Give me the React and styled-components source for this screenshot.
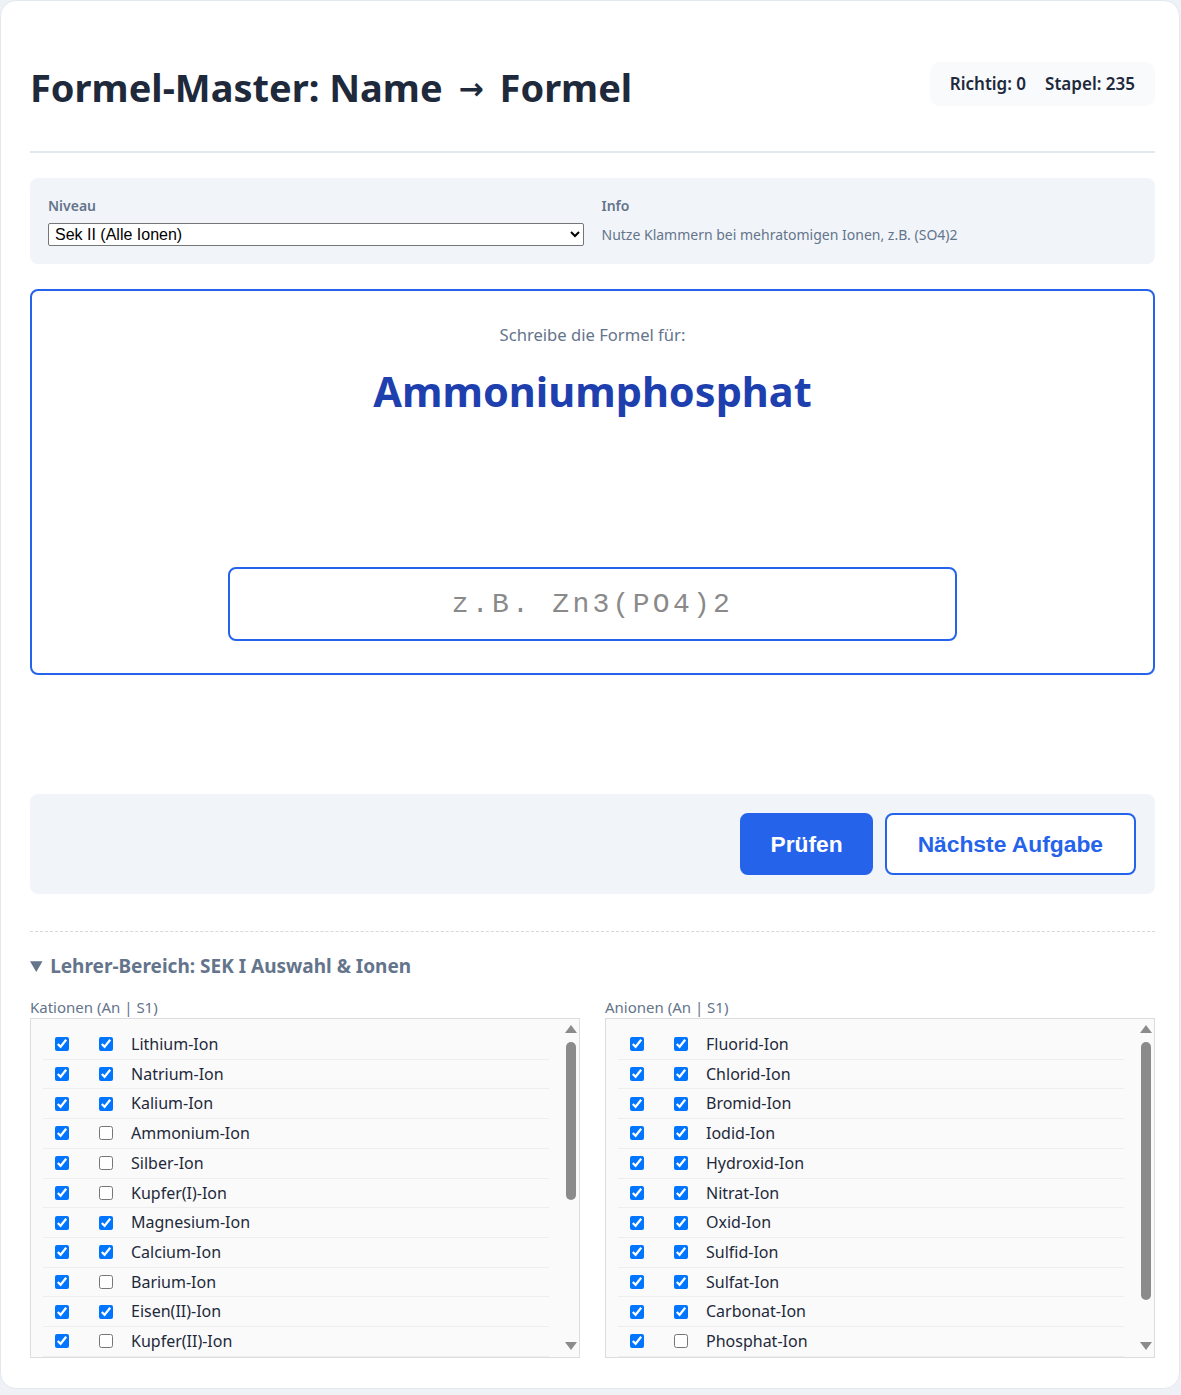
import React from 'react'
import styled, { createGlobalStyle } from 'styled-components'

const GlobalStyle = createGlobalStyle`
  * { box-sizing: border-box; }
  body {
    margin: 0;
    background: #eef2f6;
    font-family: "Noto Sans", "Open Sans", sans-serif;
    color: #1e293b;
  }
`

const Card = styled.div`
  width: 1180px;
  min-height: 1389px;
  background: #ffffff;
  border: 1px solid #e2e8f0;
  border-radius: 16px;
  padding: 63px 24px 30px 29px;
  display: flex;
  flex-direction: column;
`

const Header = styled.header`
  display: flex;
  justify-content: space-between;
  align-items: center;
  padding-bottom: 41px;
  border-bottom: 2px solid #e2e8f0;
`

const Title = styled.h1`
  margin: 0;
  font-size: 38px;
  line-height: 46px;
  font-weight: 700;
  color: #1e293b;
`

const TitleArrow = styled.span`
  font-family: "DejaVu Sans", sans-serif;
  font-size: 30px;
  line-height: 1;
  vertical-align: 3px;
  margin: 0 6px;
`

const Stats = styled.div`
  display: flex;
  gap: 19px;
  background: #f8fafc;
  border-radius: 10px;
  padding: 10px 20px;
  margin-top: -6px;
  font-size: 17px;
  font-weight: 600;
  line-height: 24px;
`

const Main = styled.main`
  display: flex;
  flex-direction: column;
  gap: 25px;
  margin-top: 25px;
`

const Panel = styled.section`
  background: #f1f5f9;
  border-radius: 8px;
  padding: ${({ $pad }) => $pad || '18px'};
`

const Controls = styled(Panel)`
  display: grid;
  grid-template-columns: 1fr 1fr;
  gap: 18px;
`

const Field = styled.div`
  display: flex;
  flex-direction: column;
  gap: 7px;
`

const Label = styled.label`
  font-size: 14px;
  font-weight: 600;
  line-height: 20px;
  color: #64748b;
`

const Select = styled.select`
  width: 100%;
  height: 23px;
  font-family: "Liberation Sans", Arial, sans-serif;
  font-size: 16px;
  color: #000;
  background: #fff;
  border: 1px solid #767676;
  border-radius: 2px;
  padding: 0 2px;
`

const InfoText = styled.span`
  font-size: 14px;
  line-height: 23px;
  color: #64748b;
`

const QuestionCard = styled.section`
  border: 2px solid #2563eb;
  border-radius: 8px;
  padding: 32px 30px;
  display: flex;
  flex-direction: column;
  align-items: center;
`

const Prompt = styled.p`
  margin: 0;
  font-size: 16.6px;
  line-height: 24px;
  color: #64748b;
`

const Compound = styled.h2`
  margin: 18px 0 0;
  font-size: 41.5px;
  line-height: 53px;
  font-weight: 700;
  color: #1e40af;
`

const Hint = styled.div`
  min-height: 149px;
`

const FormulaInput = styled.input`
  width: 729px;
  height: 74px;
  border: 2px solid #2563eb;
  border-radius: 8px;
  text-align: center;
  font-family: "Liberation Mono", "Courier New", monospace;
  font-size: 28px;
  letter-spacing: 3.3px;
  color: #1e293b;
  outline: none;

  &::placeholder { color: #8a8a8a; }
`

const Feedback = styled.div`
  min-height: 69px;
`

const Actions = styled(Panel)`
  display: flex;
  justify-content: flex-end;
  gap: 12px;
`

const Button = styled.button`
  height: 62px;
  padding: 0 ${({ $outline }) => ($outline ? '31px' : '28px')};
  border: 2px solid #2563eb;
  border-radius: 8px;
  background: ${({ $outline }) => ($outline ? '#fff' : '#2563eb')};
  color: ${({ $outline }) => ($outline ? '#2563eb' : '#fff')};
  font-family: "Liberation Sans", Arial, sans-serif;
  font-size: 22.8px;
  font-weight: 700;
  cursor: pointer;
`

const Divider = styled.hr`
  margin: 37px 0 0;
  border: 0;
  border-top: 1px dashed #d4d8de;
`

const Teacher = styled.details`
  margin-top: 21px;
`

const Summary = styled.summary`
  font-size: 19px;
  font-weight: 700;
  line-height: 27px;
  color: #64748b;
  cursor: pointer;
`

const Columns = styled.div`
  display: grid;
  grid-template-columns: 1fr 1fr;
  gap: 25px;
  margin-top: 17px;
`

const ColumnTitle = styled.div`
  font-size: 15px;
  line-height: 21px;
  color: #64748b;
`

const ListBox = styled.div`
  display: flex;
  height: 340px;
  border: 1px solid #dddddd;
  background: #fafafa;
`

const ListScroll = styled.div`
  flex: 1;
  overflow: hidden;
  padding: 11px 14px 8px 12px;
`

const ScrollRail = styled.div`
  width: 16px;
  display: flex;
  flex-direction: column;
  align-items: center;
  padding: 6px 0 7px;
`

const Arrow = styled.span`
  width: 0;
  height: 0;
  border-left: 6px solid transparent;
  border-right: 6px solid transparent;
  ${({ $down }) => ($down ? 'border-top' : 'border-bottom')}: 8px solid #8b8b8b;
  ${({ $down }) => ($down ? 'margin-top: auto;' : '')}
`

const Thumb = styled.span`
  width: 10px;
  height: ${({ $size }) => $size}px;
  margin-top: 9px;
  border-radius: 5px;
  background: #8b8b8b;
`

const Row = styled.label`
  display: grid;
  grid-template-columns: 44px 32px 1fr;
  align-items: center;
  padding: 4px 0 4px 12px;
  border-bottom: 1px solid #eeeeee;
  font-size: 16px;
  line-height: 20.7px;
  color: #1e293b;
`

const Check = styled.input`
  margin: 0;
  width: 14px;
  height: 14px;
`

const kationen = [
  ['Lithium-Ion', true], ['Natrium-Ion', true], ['Kalium-Ion', true],
  ['Ammonium-Ion', false], ['Silber-Ion', false], ['Kupfer(I)-Ion', false],
  ['Magnesium-Ion', true], ['Calcium-Ion', true], ['Barium-Ion', false],
  ['Eisen(II)-Ion', true], ['Kupfer(II)-Ion', false], ['Zink-Ion', true],
  ['Blei(II)-Ion', false], ['Zinn(II)-Ion', false], ['Eisen(III)-Ion', true],
  ['Aluminium-Ion', true], ['Chrom(III)-Ion', false], ['Mangan(II)-Ion', false],
  ['Nickel(II)-Ion', false], ['Cobalt(II)-Ion', false], ['Quecksilber(II)-Ion', false],
]

const anionen = [
  ['Fluorid-Ion', true], ['Chlorid-Ion', true], ['Bromid-Ion', true],
  ['Iodid-Ion', true], ['Hydroxid-Ion', true], ['Nitrat-Ion', true],
  ['Oxid-Ion', true], ['Sulfid-Ion', true], ['Sulfat-Ion', true],
  ['Carbonat-Ion', true], ['Phosphat-Ion', false], ['Nitrit-Ion', false],
  ['Hydrogencarbonat-Ion', false],
]

const IonList = ({ title, items, thumb }) => (
  <div>
    <ColumnTitle>{title}</ColumnTitle>
    <ListBox>
      <ListScroll>
        {items.map(([name, s1]) => (
          <Row key={name}>
            <Check type="checkbox" defaultChecked />
            <Check type="checkbox" defaultChecked={s1} />
            <span>{name}</span>
          </Row>
        ))}
      </ListScroll>
      <ScrollRail>
        <Arrow />
        <Thumb $size={thumb} />
        <Arrow $down />
      </ScrollRail>
    </ListBox>
  </div>
)

const App = () => {
  return (
    <>
      <GlobalStyle />
      <Card>
        <Header>
          <Title>Formel-Master: Name <TitleArrow>→</TitleArrow> Formel</Title>
          <Stats>
            <span>Richtig: 0</span>
            <span>Stapel: 235</span>
          </Stats>
        </Header>
        <Main>
          <Controls>
            <Field>
              <Label>Niveau</Label>
              <Select defaultValue="sek2">
                <option value="sek1">Sek I</option>
                <option value="sek2">Sek II (Alle Ionen)</option>
              </Select>
            </Field>
            <Field>
              <Label>Info</Label>
              <InfoText>Nutze Klammern bei mehratomigen Ionen, z.B. (SO4)2</InfoText>
            </Field>
          </Controls>
          <QuestionCard>
            <Prompt>Schreibe die Formel für:</Prompt>
            <Compound>Ammoniumphosphat</Compound>
            <Hint />
            <FormulaInput placeholder="z.B. Zn3(PO4)2" />
          </QuestionCard>
          <Feedback />
          <Actions $pad="19px">
            <Button>Prüfen</Button>
            <Button $outline>Nächste Aufgabe</Button>
          </Actions>
        </Main>
        <Divider />
        <Teacher open>
          <Summary>Lehrer-Bereich: SEK I Auswahl &amp; Ionen</Summary>
          <Columns>
            <IonList title="Kationen (An | S1)" items={kationen} thumb={158} />
            <IonList title="Anionen (An | S1)" items={anionen} thumb={258} />
          </Columns>
        </Teacher>
      </Card>
    </>
  )
}

export default App
